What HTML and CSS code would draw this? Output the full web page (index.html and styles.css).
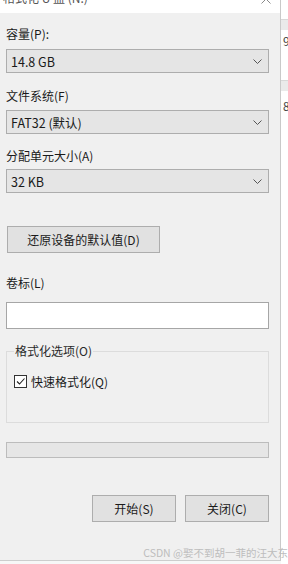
FILE: index.html
```html
<!DOCTYPE html>
<html lang="zh-CN">
<head>
    <meta charset="UTF-8">
    <meta name="viewport" content="width=device-width, initial-scale=1.0">
    <title>格式化 U 盘 (N:)</title>
    <link rel="stylesheet" href="styles.css">
</head>
<body>
    <div class="screen">
        <div class="dialog">
            <div class="titlebar">
                <span class="title">格式化 U 盘 (N:)</span>
                <svg class="close" width="10" height="10" viewBox="0 0 10 10">
                    <path d="M0.5 0.5 L9.5 9.5 M9.5 0.5 L0.5 9.5" stroke="#8a8a8a" stroke-width="1" fill="none"/>
                </svg>
            </div>

            <div class="content">
                <div class="label l-cap">容量(P):</div>
                <div class="select s-cap">
                    <span>14.8 GB</span>
                    <svg class="chev" width="9" height="5" viewBox="0 0 9 5"><path d="M0.5 0.5 L4.5 4.5 L8.5 0.5" stroke="#555" fill="none"/></svg>
                </div>

                <div class="label l-fs">文件系统(F)</div>
                <div class="select s-fs">
                    <span>FAT32 (默认)</span>
                    <svg class="chev" width="9" height="5" viewBox="0 0 9 5"><path d="M0.5 0.5 L4.5 4.5 L8.5 0.5" stroke="#555" fill="none"/></svg>
                </div>

                <div class="label l-au">分配单元大小(A)</div>
                <div class="select s-au">
                    <span>32 KB</span>
                    <svg class="chev" width="9" height="5" viewBox="0 0 9 5"><path d="M0.5 0.5 L4.5 4.5 L8.5 0.5" stroke="#555" fill="none"/></svg>
                </div>

                <button class="btn restore">还原设备的默认值(D)</button>

                <div class="label l-vol">卷标(L)</div>
                <div class="textbox"></div>

                <fieldset class="group">
                    <legend>格式化选项(O)</legend>
                    <div class="check-row">
                        <span class="checkbox">
                            <svg width="11" height="11" viewBox="0 0 11 11"><path d="M2 5.5 L4.5 8 L9.5 2.5" stroke="#222" stroke-width="1.1" fill="none"/></svg>
                        </span>
                        <span>快速格式化(Q)</span>
                    </div>
                </fieldset>

                <div class="progress"></div>

                <div class="actions">
                    <button class="btn action">开始(S)</button>
                    <button class="btn action">关闭(C)</button>
                </div>
            </div>
        </div>

        <div class="behind">
            <div class="band b1"></div>
            <div class="digit d1">9</div>
            <div class="band b2"></div>
            <div class="digit d2">8</div>
        </div>

        <div class="watermark">CSDN @娶不到胡一菲的汪大东</div>
    </div>
</body>
</html>
```

FILE: styles.css
```css
body {
    margin: 0;
    background: #f7f7f7;
    font-family: "Noto Sans CJK SC", "Noto Sans", sans-serif;
    font-size: 12px;
    color: #1a1a1a;
}
.screen {
    position: relative;
    display: flex;
    width: 288px;
    height: 564px;
    overflow: hidden;
}
.dialog {
    width: 280px;
    height: 560px;
    background: #f0f0f0;
    border-right: 1px solid #c9c9c9;
    border-bottom: 1px solid #cdcdcd;
    display: flex;
    flex-direction: column;
}
.titlebar {
    height: 13px;
    background: #ffffff;
    display: flex;
    justify-content: space-between;
    overflow: hidden;
    padding: 0 9px 0 3px;
}
.title {
    margin-top: -10px;
    line-height: 16px;
    font-size: 12px;
    color: #555;
}
.close {
    margin-top: -6px;
}
.content {
    padding: 0 11px 0 6px;
    display: flex;
    flex-direction: column;
}
.label {
    height: 16px;
    line-height: 16px;
}
.l-cap { margin-top: 13px; }
.l-fs { margin-top: 15px; }
.l-au { margin-top: 14px; }
.l-vol { margin-top: 22px; }
.select {
    height: 24px;
    box-sizing: border-box;
    background: #e5e5e5;
    border: 1px solid #adadad;
    display: flex;
    align-items: center;
    justify-content: space-between;
    padding: 0 6px 0 4px;
    font-size: 12.5px;
}
.s-cap { margin-top: 7px; }
.s-fs { margin-top: 6px; }
.s-au { margin-top: 5px; }
.btn {
    font-family: inherit;
    font-size: 12px;
    color: #1a1a1a;
    background: #e1e1e1;
    border: 1px solid #adadad;
    border-radius: 0;
    height: 27px;
    padding: 0;
}
.restore {
    margin-top: 33px;
    margin-left: 1px;
    width: 153px;
}
.textbox {
    margin-top: 11px;
    height: 27px;
    box-sizing: border-box;
    background: #ffffff;
    border: 1px solid #a6a6a6;
}
.group {
    margin: 14px 0 0 0;
    padding: 0 7px;
    height: 80px;
    box-sizing: border-box;
    border: 1px solid #dcdcdc;
    min-width: 0;
}
.group legend {
    padding: 0 1px;
    line-height: 16px;
    color: #2a2a2a;
}
.check-row {
    margin-top: 14px;
    display: flex;
    align-items: center;
    gap: 4px;
    height: 16px;
}
.checkbox {
    width: 11px;
    height: 11px;
    border: 1px solid #333;
    background: #fff;
    display: flex;
}
.progress {
    margin-top: 19px;
    height: 16px;
    box-sizing: border-box;
    background: #e6e6e6;
    border: 1px solid #bcbcbc;
}
.actions {
    margin-top: 37px;
    display: flex;
    justify-content: flex-end;
    gap: 9px;
}
.action {
    width: 84px;
}
.behind {
    width: 7px;
    height: 564px;
    background: #ffffff;
    display: flex;
    flex-direction: column;
    overflow: hidden;
}
.band {
    height: 10px;
    background: #eaeaea;
    border-top: 1px solid #d8d8d8;
}
.b1 { margin-top: 19px; }
.b2 { margin-top: 32px; }
.digit {
    height: 14px;
    line-height: 14px;
    padding-left: 2px;
    color: #444;
    font-size: 12px;
}
.d1 { margin-top: 4px; }
.d2 { margin-top: 8px; }
.watermark {
    position: absolute;
    right: 0;
    top: 546px;
    font-size: 10.5px;
    line-height: 13px;
    color: #bdbdbd;
    white-space: nowrap;
}
```
